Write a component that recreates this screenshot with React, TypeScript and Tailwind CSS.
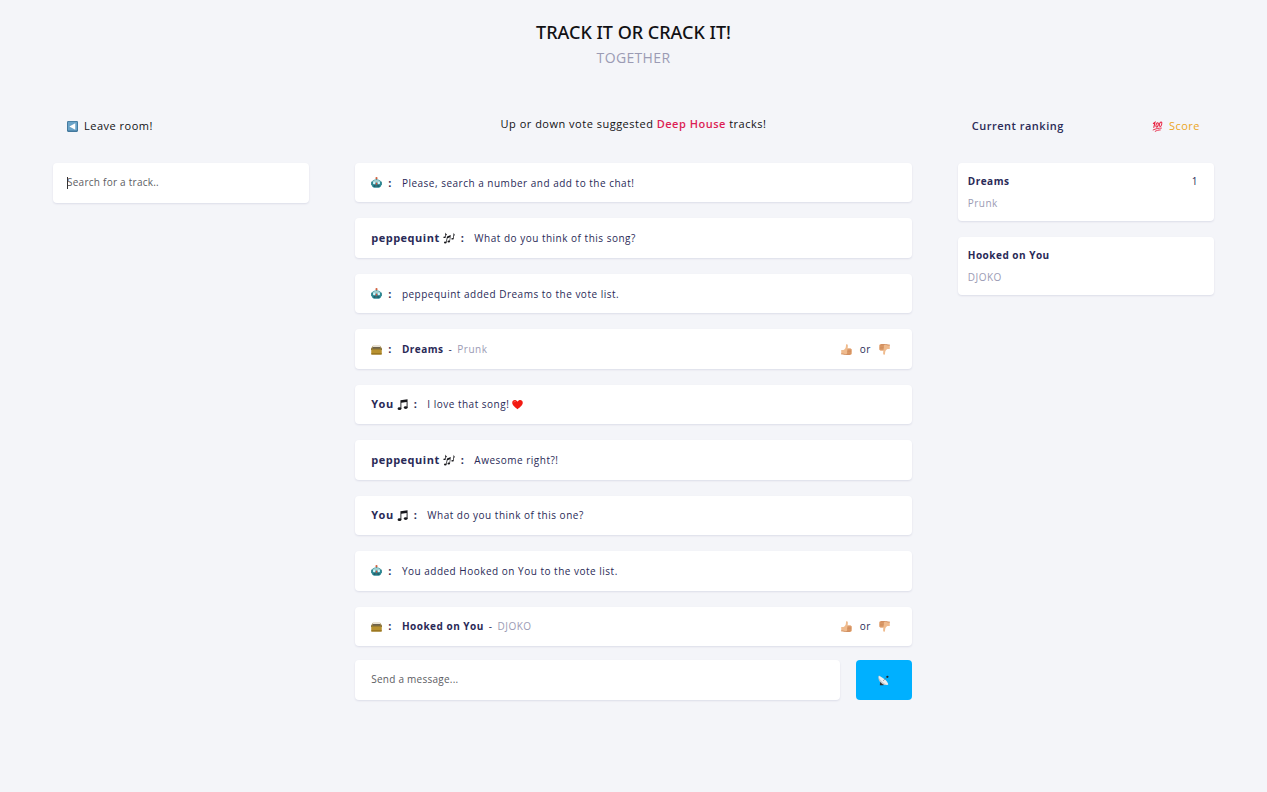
import type { ReactNode } from "react";

type IconProps = { className?: string };

function BackIcon({ className = "size-[11px]" }: IconProps) {
  return (
    <svg viewBox="0 0 24 24" className={className} aria-hidden="true">
      <rect x="0" y="0" width="24" height="24" rx="2.5" fill="#42789d" />
      <rect x="2" y="1.500" width="20" height="19" rx="1.5" fill="#6aa3c8" />
      <path d="M18 5v14L5 12z" fill="#fff" />
    </svg>
  );
}

function RobotIcon({ className = "size-[11px]" }: IconProps) {
  return (
    <svg viewBox="0 0 24 24" className={className} aria-hidden="true">
      <rect x="11" y="2" width="2" height="5" fill="#b9865f" />
      <circle cx="12" cy="2.500" r="2.300" fill="#d0603f" />
      <rect x="0" y="10" width="4" height="8" rx="1.600" fill="#4d8f96" />
      <rect x="20" y="10" width="4" height="8" rx="1.600" fill="#4d8f96" />
      <path d="M2 11c1.500-4.500 6-5.500 10-5.500s8.500 1 10 5.500c1.500 5 .5 8.500-2.500 11.500-1.500 1.500-13.500 1.500-15 0C1.500 19.500.5 16 2 11z" fill="#2a8995" />
      <path d="M3.500 10.500C5.500 7 8.500 6.500 12 6.500s6.500.5 8.500 4l-8.500 2z" fill="#9fcfd0" />
      <circle cx="7" cy="13" r="2.800" fill="#d3f4f8" />
      <circle cx="17" cy="13" r="2.800" fill="#d3f4f8" />
      <path d="M12 11.500l2.500 5h-5z" fill="#e0472f" />
      <rect x="5.500" y="18" width="13" height="3.500" rx="1" fill="#12505c" />
      <path d="M8.500 19h1.200v1.400H8.500zm3 0h1.200v1.400h-1.200zm3 0h1.200v1.400h-1.200z" fill="#cfe9ea" />
    </svg>
  );
}

function BallotIcon({ className = "size-[11px]" }: IconProps) {
  return (
    <svg viewBox="0 0 24 24" className={className} aria-hidden="true">
      <path d="M4 4h16l4 6v3H0v-3z" fill="#a99058" />
      <path d="M5 2.500h14l1.500 4h-17z" fill="#e8e1d2" />
      <path d="M4.500 7h15l1.500 3H3z" fill="#5a544c" />
      <rect x="0" y="10" width="24" height="2.500" fill="#766029" />
      <rect x="0.500" y="12" width="23" height="11" rx="1" fill="#b8912f" />
      <rect x="0.500" y="20" width="23" height="3" rx="1" fill="#93701f" />
    </svg>
  );
}

function NotesIcon({ className = "size-3" }: IconProps) {
  return (
    <svg viewBox="0 0 24 24" className={className} aria-hidden="true" fill="#17171b">
      <ellipse cx="3" cy="10.500" rx="2.300" ry="1.700" />
      <path d="M3.900 10.500L4.500 1c1 3 4 3 3.700 6.500C7.500 6 6.500 5.500 5.700 5.300L5.200 10.500z" />
      <ellipse cx="4.500" cy="21" rx="2.600" ry="2" />
      <ellipse cx="11.500" cy="19" rx="2.600" ry="2" />
      <path d="M5.800 21L8 9l7.500-3L14 19h-1.300l1.200-8.500-4.900 1.900L7 21z" />
      <ellipse cx="19" cy="13.500" rx="2.300" ry="1.700" />
      <path d="M20 13.500l1.200-12c.5 2.500 3 3 2.200 6.500l-1.200-2-.8 7.500z" />
    </svg>
  );
}

function NoteIcon({ className = "size-[11px]" }: IconProps) {
  return (
    <svg viewBox="0 0 24 24" className={className} aria-hidden="true" fill="#17171b">
      <path d="M7.500 2.500L23 .5v18h-2V6.500L9.500 8.300V21h-2z" />
      <ellipse cx="5.500" cy="21" rx="4.200" ry="2.900" />
      <ellipse cx="19" cy="18.800" rx="4.200" ry="2.900" />
    </svg>
  );
}

function HeartIcon({ className = "size-[11px]" }: IconProps) {
  return (
    <svg viewBox="0 0 24 24" className={className} aria-hidden="true">
      <path d="M12 22.500C9 19 .5 14.500.5 8 .5 1.500 9 .5 12 6c3-5.500 11.500-4.500 11.500 2 0 6.500-8.500 11-11.500 14.500z" fill="#f21a12" />
      <path d="M4 7.500c.5-2.500 3-3 4.500-2" stroke="#ff7a6b" strokeWidth="1.500" fill="none" />
    </svg>
  );
}

function ThumbPath() {
  return (
    <>
      <path d="M.5 13h5c2.500-1 4.500-3.500 5-6.500L11 1.500c.5-1.500 4-1 4 2.500 0 2.500-.5 4-.5 6H20c3 0 3.500 2.500 3 4v6.500c0 2-1.500 3-3.500 3H10c-3 0-5-1-9.500-1z" fill="#efbb8e" />
      <path d="M14.500 10H20c3 0 3.500 2.500 3 4v6.500c0 2-1.500 3-3.500 3H12c2-3 1-9 2.500-13.500z" fill="#e2a473" />
      <path d="M14 13.500h8.500M13.500 16.800h9M13.500 20h8.500" stroke="#b8703f" strokeWidth="1" />
      <path d="M.5 21.500c4.500 0 6.500 1.500 9.500 1.500h9.500" stroke="#c98353" strokeWidth="1.600" fill="none" />
    </>
  );
}

function ThumbUpIcon({ className = "size-[11px]" }: IconProps) {
  return (
    <svg viewBox="0 0 24 24" className={className} aria-hidden="true">
      <ThumbPath />
    </svg>
  );
}

function ThumbDownIcon({ className = "size-[11px]" }: IconProps) {
  return (
    <svg viewBox="0 0 24 24" className={className} aria-hidden="true">
      <g transform="rotate(180 12 12)">
        <ThumbPath />
      </g>
    </svg>
  );
}

function HundredIcon({ className = "size-[11px]" }: IconProps) {
  return (
    <svg viewBox="0 0 24 24" className={className} aria-hidden="true" fill="none" stroke="#e8203f" strokeLinecap="round">
      <path d="M3 5.500L6.500 3 4 14" strokeWidth="2.400" />
      <ellipse cx="11.200" cy="8.500" rx="2.300" ry="5" transform="rotate(18 11.200 8.500)" strokeWidth="2.200" />
      <ellipse cx="18.700" cy="7" rx="2.400" ry="5" transform="rotate(18 18.700 7)" strokeWidth="2.200" />
      <path d="M2.500 19.500c6-3 12-4 18-4M7 22.500c3.500-2 7-3 11-3" strokeWidth="2" />
    </svg>
  );
}

function SatelliteIcon({ className = "size-[11px]" }: IconProps) {
  return (
    <svg viewBox="0 0 24 24" className={className} aria-hidden="true">
      <path d="M5 12L4 22.500h8L13 17z" fill="#2c3036" />
      <path d="M1 2.500C0 9 2.500 13.500 7 17.500s8.500 5.500 14 4c1-1 .5-2-.5-3L4.500 2.500C3.200 1.300 2 1.500 1 2.500z" fill="#c3c7cb" />
      <path d="M2 2.500c3 0 10 4 14.500 8.500s6.500 9 5.500 10.500c-3 .5-9.500-3.500-14-8S.5 4.500 2 2.500z" fill="#eceef0" />
      <path d="M11 13L19.500 5" stroke="#6a7077" strokeWidth="1.200" fill="none" />
      <circle cx="20.500" cy="4" r="2.500" fill="#22262b" />
    </svg>
  );
}

type Message =
  | { kind: "bot"; text: string }
  | { kind: "user"; name: string; icon: ReactNode; text: string; tail?: ReactNode }
  | { kind: "vote"; track: string; artist: string };

const messages: Message[] = [
  { kind: "bot", text: "Please, search a number and add to the chat!" },
  { kind: "user", name: "peppequint", icon: <NotesIcon />, text: "What do you think of this song?" },
  { kind: "bot", text: "peppequint added Dreams to the vote list." },
  { kind: "vote", track: "Dreams", artist: "Prunk" },
  { kind: "user", name: "You", icon: <NoteIcon />, text: "I love that song!", tail: <HeartIcon /> },
  { kind: "user", name: "peppequint", icon: <NotesIcon />, text: "Awesome right?!" },
  { kind: "user", name: "You", icon: <NoteIcon />, text: "What do you think of this one?" },
  { kind: "bot", text: "You added Hooked on You to the vote list." },
  { kind: "vote", track: "Hooked on You", artist: "DJOKO" },
];

const ranking = [
  { track: "Dreams", artist: "Prunk", score: 1 },
  { track: "Hooked on You", artist: "DJOKO", score: null },
];

function MessageRow({ message }: { message: Message }) {
  return (
    <li className="flex items-center rounded bg-white px-4 shadow-[0_1px_2px_#dcdde8]">
      <span className="flex items-center gap-[3px] text-[11px] font-bold">
        {message.kind === "user" && message.name}
        {message.kind === "user" && message.icon}
        {message.kind === "bot" && <RobotIcon />}
        {message.kind === "vote" && <BallotIcon />}
      </span>
      <span className="ml-1.5 mr-2.5 text-[11px] font-bold">:</span>
      {message.kind === "vote" ? (
        <>
          <p className="flex gap-[5px]">
            <strong className="font-bold">{message.track}</strong>
            <span>-</span>
            <span className="text-[#9b9bb4]">{message.artist}</span>
          </p>
          <div className="ml-auto mr-1.5 flex items-center gap-2">
            <button type="button" aria-label={"Vote up " + message.track}>
              <ThumbUpIcon />
            </button>
            <span>or</span>
            <button type="button" aria-label={"Vote down " + message.track}>
              <ThumbDownIcon />
            </button>
          </div>
        </>
      ) : (
        <p className="flex items-center gap-[3px]">
          {message.text}
          {message.kind === "user" && message.tail}
        </p>
      )}
    </li>
  );
}

export default function App() {
  return (
    <div className="min-h-screen bg-[#f4f5f9] px-[53px] pt-5 pb-16 font-['Open_Sans','Noto_Sans',sans-serif] text-[10px] leading-4 tracking-wider text-[#2a2a57]">
      <header className="text-center">
        <h1 className="font-['Noto_Sans',sans-serif] text-lg leading-6 font-medium tracking-normal text-[#111114]">TRACK IT OR CRACK IT!</h1>
        <p className="mt-1 text-sm leading-5 tracking-wide text-[#9b9bb4]">TOGETHER</p>
      </header>

      <main className="mt-10 grid grid-cols-[256fr_556fr_256fr] gap-x-[46px]">
        <section>
          <div className="flex h-9 items-center px-3.5">
            <a href="#rooms" className="flex items-center gap-1.5 text-[11px] font-medium text-[#111114]">
              <BackIcon />
              Leave room!
            </a>
          </div>
          <div className="relative mt-[19px] flex">
            <input
              type="text"
              aria-label="Search for a track"
              placeholder="Search for a track.."
              className="h-10 w-full rounded bg-white px-3.5 pb-0.5 tracking-wide shadow-[0_1px_2px_#dcdde8] outline-none placeholder:text-[#5c5c62]"
            />
            <span className="pointer-events-none absolute top-3.5 left-3.5 h-3 w-px bg-[#333]" />
          </div>
        </section>

        <section>
          <div className="flex h-8 items-center justify-center text-[11px] font-medium text-[#111114]">
            <h2>
              Up or down vote suggested <strong className="font-semibold text-[#dc1e55]">Deep House</strong> tracks!
            </h2>
          </div>
          <ul className="mt-[23px] grid min-h-[483px] auto-rows-fr gap-4">
            {messages.map((message, index) => (
              <MessageRow key={index} message={message} />
            ))}
          </ul>
          <form className="mt-3.5 flex gap-4" onSubmit={(event) => event.preventDefault()}>
            <input
              type="text"
              aria-label="Message"
              placeholder="Send a message..."
              className="h-10 min-w-0 flex-1 rounded bg-white px-4 pb-0.5 tracking-wide shadow-[0_1px_2px_#dcdde8] outline-none placeholder:text-[#5c5c62]"
            />
            <button type="submit" aria-label="Send" className="flex h-10 w-14 items-center justify-center rounded bg-[#00b0ff]">
              <SatelliteIcon />
            </button>
          </form>
        </section>

        <section>
          <div className="flex h-9 items-center justify-between px-3.5 text-[11px]">
            <h2 className="font-semibold">Current ranking</h2>
            <span className="flex items-center gap-1.5 font-medium text-[#eba51c]">
              <HundredIcon />
              Score
            </span>
          </div>
          <ol className="mt-[19px] grid gap-4">
            {ranking.map((entry) => (
              <li key={entry.track} className="flex justify-between rounded bg-white py-2.5 pr-4 pl-2.5 shadow-[0_1px_2px_#dcdde8]">
                <div className="grid gap-1.5">
                  <h3 className="font-bold">{entry.track}</h3>
                  <p className="text-[#9b9bb4]">{entry.artist}</p>
                </div>
                {entry.score !== null && <span>{entry.score}</span>}
              </li>
            ))}
          </ol>
        </section>
      </main>
    </div>
  );
}
